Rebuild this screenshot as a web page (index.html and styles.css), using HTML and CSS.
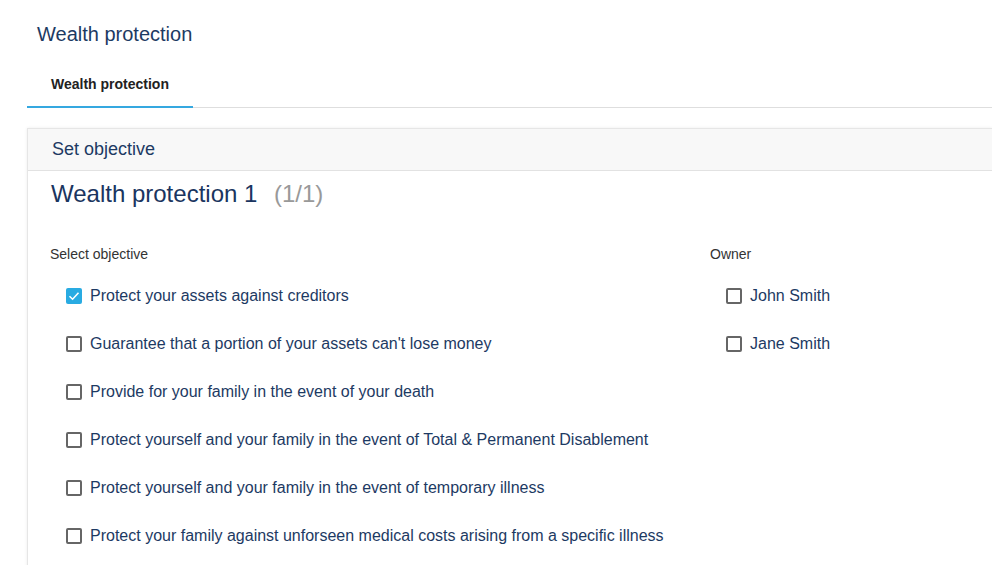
FILE: index.html
```html
<!DOCTYPE html>
<html>
<head>
<meta charset="utf-8">
<link rel="stylesheet" href="styles.css">
</head>
<body>
<div class="page">
  <h1 class="page-title">Wealth protection</h1>
  <div class="tabs">
    <div class="tab active">Wealth protection</div>
  </div>
  <div class="card">
    <div class="card-header">Set objective</div>
    <div class="card-body">
      <h2 class="section-title">Wealth protection 1 <span class="count">(1/1)</span></h2>
      <div class="columns">
        <div class="col objectives">
          <div class="label">Select objective</div>
          <label class="check"><span class="box checked"><svg viewBox="0 0 16 16" width="16" height="16"><path d="M3.5 8.2 L6.6 11.2 L12.5 4.8" fill="none" stroke="#fff" stroke-width="1.6"/></svg></span>Protect your assets against creditors</label>
          <label class="check"><span class="box"></span>Guarantee that a portion of your assets can't lose money</label>
          <label class="check"><span class="box"></span>Provide for your family in the event of your death</label>
          <label class="check"><span class="box"></span>Protect yourself and your family in the event of Total &amp; Permanent Disablement</label>
          <label class="check"><span class="box"></span>Protect yourself and your family in the event of temporary illness</label>
          <label class="check"><span class="box"></span>Protect your family against unforseen medical costs arising from a specific illness</label>
        </div>
        <div class="col owners">
          <div class="label">Owner</div>
          <label class="check"><span class="box"></span>John Smith</label>
          <label class="check"><span class="box"></span>Jane Smith</label>
        </div>
      </div>
    </div>
  </div>
</div>
</body>
</html>
```
FILE: styles.css
```css
html, body {
  margin: 0;
  padding: 0;
  background: #fff;
  font-family: "Liberation Sans", Arial, sans-serif;
  overflow: hidden;
  height: 565px;
}
.page {
  padding: 22px 0 0 27px;
}
.page-title {
  margin: 0 0 0 10px;
  font-size: 20px;
  font-weight: normal;
  color: #1d3a63;
  line-height: 24px;
}
.tabs {
  margin-top: 13px;
  border-bottom: 1px solid #dedede;
  display: flex;
}
.tab {
  width: 166px;
  box-sizing: border-box;
  padding: 17px 0 14px 24px;
  font-size: 14px;
  font-weight: bold;
  color: #222;
  line-height: 16px;
  border-bottom: 2px solid #35a8e0;
  margin-bottom: -1px;
}
.card {
  margin-top: 20px;
  border: 1px solid #e6e6e6;
  border-right: none;
  border-bottom: none;
  box-shadow: 0 0 3px rgba(0,0,0,0.08);
  height: 445px;
}
.card-header {
  background: #f8f8f8;
  border-bottom: 1px solid #e2e2e2;
  height: 41px;
  line-height: 40px;
  padding-left: 24px;
  font-size: 18px;
  color: #1d3a63;
}
.card-body {
  padding: 0 0 0 23px;
}
.section-title {
  margin: 9px 0 0 0;
  font-size: 24px;
  font-weight: normal;
  color: #1a3560;
  line-height: 28px;
}
.count {
  color: #999;
  margin-left: 10px;
}
.columns {
  display: flex;
  margin-top: 38px;
}
.objectives {
  width: 660px;
}
.label {
  font-size: 14px;
  color: #333;
  line-height: 16px;
  margin: 0 0 24px -1px;
}
.check {
  display: flex;
  align-items: center;
  height: 48px;
  margin-top: -14px;
  margin-bottom: 14px;
  padding-left: 15px;
  font-size: 16px;
  color: #1d3a63;
}
.box {
  width: 16px;
  height: 16px;
  box-sizing: border-box;
  border: 2px solid #666;
  border-radius: 2px;
  margin-right: 8px;
  display: inline-flex;
  flex: none;
}
.box.checked {
  background: #29abe2;
  border: none;
}
.box svg {
  display: block;
}
```
